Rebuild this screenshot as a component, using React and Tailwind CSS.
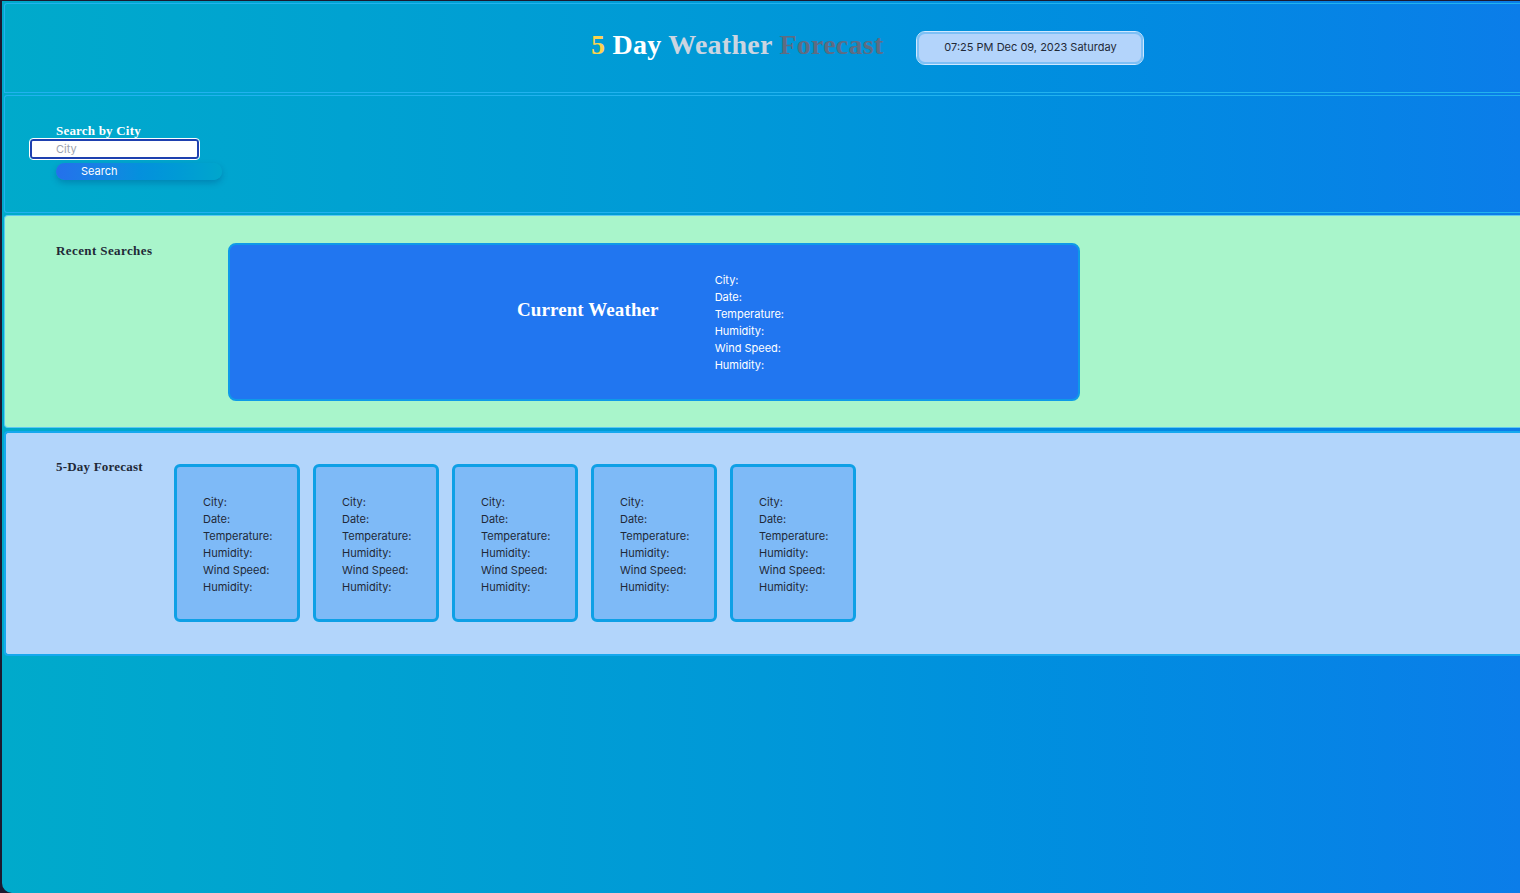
export default function App() {
  const serif = { fontFamily: '"Liberation Serif", "DejaVu Serif", serif' };
  const labels = ["City:", "Date:", "Temperature:", "Humidity:", "Wind Speed:", "Humidity:"];
  return (
    <div className="h-[893px] w-[1520px] overflow-hidden bg-[#1c1a30] pt-[1px] pl-[2px]" style={{ fontFamily: '"Inter", "Liberation Sans", sans-serif' }}>
      <div className="h-full w-full overflow-hidden rounded-bl-[10px] bg-gradient-to-r from-[#00aacb] via-[#0098d8] to-[#0b7de9] pl-[2px] pt-[2px] flex flex-col">
        {/* Header */}
        <header className="h-[90px] shrink-0 border border-r-0 border-[#22b2ee] rounded-tl-[3px] flex items-center pl-[586px] gap-[34px]">
          <h1 className="-mt-[6px] text-[28px] font-bold leading-none tracking-[0.25px]" style={serif}>
            <span className="text-[#fcd34d]">5</span>{" "}
            <span className="text-white">Day</span>{" "}
            <span className="text-[#cbd5e1]">Weather</span>{" "}
            <span className="text-[#5f6c82]">Forecast</span>
          </h1>
          <div className="-mt-[1px] h-[32px] w-[226px] rounded-[8px] border-2 border-[#7ec0f6] bg-[#b3d4fb] outline outline-1 outline-[#cfe8ff] flex items-center justify-center text-[11px] text-[#1f2937]">
            07:25 PM Dec 09, 2023 Saturday
          </div>
        </header>

        {/* Search */}
        <section className="mt-[2px] h-[118px] shrink-0 border border-r-0 border-[#22b2ee] rounded-l-[3px] flex flex-col pl-[25px] pt-[27px]">
          <label className="ml-[26px] text-[13px] font-bold leading-[15px] tracking-[0.2px] text-white" style={serif}>Search by City</label>
          <input
            placeholder="City"
            className="mt-[1px] h-[20px] w-[169px] rounded-[3px] border-2 border-[#1e40af] bg-white pl-[24px] text-[11px] text-gray-800 placeholder:text-[#9ca3af] outline outline-1 outline-white"
          />
          <button className="ml-[26px] mt-[4px] h-[17px] w-[166px] rounded-full bg-gradient-to-r from-[#2470ec] via-[#0590dd] to-[#00a6cc] text-left pl-[25px] text-[11px] leading-[17px] text-white shadow-[0_3px_6px_rgba(0,60,120,0.3)]">
            Search
          </button>
        </section>

        {/* Recent + current */}
        <section className="mt-[2px] h-[213px] shrink-0 border border-r-0 border-[#5cc8f2] rounded-l-[4px] bg-[#a9f5cb] flex pl-[51px] pt-[27px]">
          <div className="w-[172px] shrink-0 text-[13px] font-bold tracking-[0.4px] leading-[15px] text-[#1f2937]" style={serif}>Recent Searches</div>
          <div className="h-[158px] w-[852px] rounded-[8px] border-2 border-[#0e9ae8] bg-[#2176f0] flex items-center justify-center gap-[56px] pr-[7px]">
            <h2 className="text-[19px] font-bold tracking-[0.1px] text-white -mt-[24px]" style={serif}>Current Weather</h2>
            <ul className="text-[11px] leading-[17px] text-white mt-[2px]">
              {labels.map((l, i) => (
                <li key={i}>{l}</li>
              ))}
            </ul>
          </div>
        </section>

        {/* Forecast */}
        <section className="mt-[3px] h-[225px] shrink-0 border-y-2 border-l-2 border-[#16a8ee] rounded-l-[4px] bg-[#b2d5fb] flex pl-[50px] pt-[31px]">
          <div className="w-[118px] shrink-0 -mt-[5px] text-[13px] font-bold tracking-[0.2px] leading-[15px] text-[#1f2937]" style={serif}>5-Day Forecast</div>
          <div className="flex gap-[13px]">
            {[0, 1, 2, 3, 4].map((c) => (
              <div key={c} className="h-[158px] w-[126px] rounded-[6px] border-[3px] border-[#0ea0e6] bg-[#7ebaf7] flex flex-col justify-center pl-[26px]">
                <ul className="text-[11px] leading-[17px] text-[#1f2937] mt-[3px]">
                  {labels.map((l, i) => (
                    <li key={i}>{l}</li>
                  ))}
                </ul>
              </div>
            ))}
          </div>
        </section>
      </div>
    </div>
  );
}
